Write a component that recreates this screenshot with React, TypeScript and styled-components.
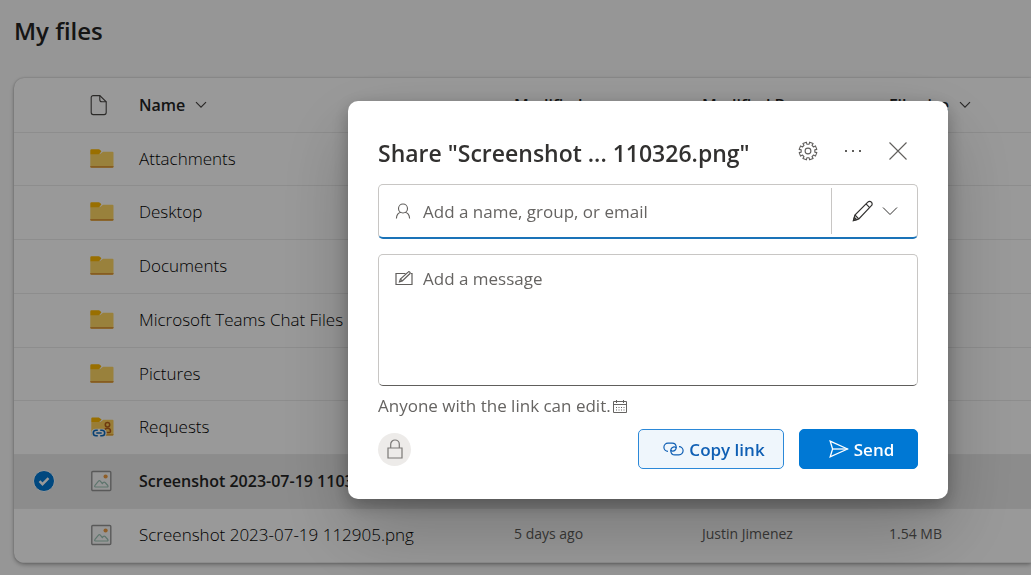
import React from "react";
import styled, { createGlobalStyle } from "styled-components";

const GlobalStyle = createGlobalStyle`
  * { box-sizing: border-box; }
  body {
    margin: 0;
    background: #fafafa;
    color: #242424;
    font-family: "Open Sans", "Noto Sans", sans-serif;
    font-weight: 400;
    overflow: hidden;
  }
  button, input, textarea { font: inherit; color: inherit; }
`;

const Page = styled.main`
  min-height: 100vh;
  padding: 12px 0 12px 14px;
`;

const PageTitle = styled.h1`
  margin: 0 0 28px;
  font-size: 24px;
  line-height: 38px;
  font-weight: 600;
`;

const Card = styled.section`
  background: #fff;
  border-radius: 10px 0 0 10px;
  box-shadow: 0 0 2px rgba(0, 0, 0, 0.24), 0 2px 4px rgba(0, 0, 0, 0.28);
  overflow: hidden;
`;

const FileTable = styled.table`
  width: 100%;
  table-layout: fixed;
  border-collapse: collapse;
  text-align: left;
`;

const Column = styled.col<{ $width?: number }>`
  width: ${(p) => (p.$width ? `${p.$width}px` : "auto")};
`;

const HeaderCell = styled.th`
  height: 54px;
  padding: 0;
  border-bottom: 1px solid #ebebeb;
  font-size: 16px;
  font-weight: 600;
  white-space: nowrap;
  svg { display: block; color: #484644; }
`;

const SortButton = styled.button`
  display: flex;
  align-items: center;
  gap: 10px;
  padding: 0;
  border: 0;
  background: none;
  cursor: pointer;
`;

const Row = styled.tr<{ $selected?: boolean }>`
  height: 54px;
  background: ${(p) => (p.$selected ? "#e9e9e9" : "transparent")};
  color: ${(p) => (p.$selected ? "#242424" : "#000")};
  font-size: ${(p) => (p.$selected ? 16 : 17)}px;
  font-weight: ${(p) => (p.$selected ? 600 : 300)};
  &:nth-child(4n + 1) { height: 53px; }
`;

const Cell = styled.td<{ $muted?: boolean }>`
  padding: ${(p) => (p.$muted ? "0 0 3px" : "0")};
  border-bottom: 1px solid #ebebeb;
  font-size: ${(p) => (p.$muted ? "14px" : "inherit")};
  font-weight: ${(p) => (p.$muted ? 400 : "inherit")};
  line-height: 24px;
  color: ${(p) => (p.$muted ? "#605e5c" : "inherit")};
  white-space: nowrap;
  svg { display: block; }
`;

const RowCheck = styled.input`
  appearance: none;
  display: block;
  width: 22px;
  height: 22px;
  margin: 0 0 0 19px;
  border: 1px solid #fff;
  border-radius: 50%;
  background: #0078d4
    url("data:image/svg+xml,%3Csvg xmlns='http://www.w3.org/2000/svg' viewBox='0 0 20 20'%3E%3Cpath d='M5.5 10.2l3 3 6-6' fill='none' stroke='white' stroke-width='2.4'/%3E%3C/svg%3E")
    center / 20px no-repeat;
`;

const Overlay = styled.div`
  position: fixed;
  inset: 0;
  display: flex;
  align-items: flex-start;
  justify-content: flex-end;
  padding: 101px 83px 0 16px;
  background: rgba(0, 0, 0, 0.4);
`;

const Dialog = styled.section`
  flex: 0 1 600px;
  padding: 30px;
  border-radius: 10px;
  background: #fff;
  box-shadow: 0 32px 72px rgba(0, 0, 0, 0.22), 0 6px 18px rgba(0, 0, 0, 0.28);
`;

const DialogHeader = styled.header`
  display: flex;
  align-items: flex-start;
  height: 44px;
  margin-bottom: 9px;
`;

const DialogTitle = styled.h2`
  flex: 1;
  margin: 0;
  font-size: 23px;
  line-height: 44px;
  font-weight: 600;
  color: #323130;
  white-space: nowrap;
`;

const HeaderActions = styled.div`
  display: flex;
  align-items: center;
  gap: 5px;
  height: 40px;
`;

const IconButton = styled.button`
  display: grid;
  place-items: center;
  width: 40px;
  height: 40px;
  padding: 0;
  border: 0;
  background: none;
  color: #605e5c;
  cursor: pointer;
`;

const RecipientField = styled.div`
  display: flex;
  align-items: center;
  height: 55px;
  border: 1px solid #c8c6c4;
  border-bottom: 2px solid #1a73b8;
  border-radius: 5px;
  color: #605e5c;
`;

const FieldLabel = styled.label`
  flex: none;
  width: 44px;
  padding-left: 16px;
  svg { display: block; }
`;

const TextInput = styled.input`
  flex: 1;
  min-width: 0;
  padding: 0;
  border: 0;
  outline: 0;
  background: none;
  font-size: 17px;
  &::placeholder { color: #666462; opacity: 1; }
`;

const PermissionButton = styled.button`
  display: flex;
  align-items: center;
  justify-content: center;
  gap: 8px;
  width: 86px;
  height: 46px;
  padding: 0;
  border: 0;
  border-left: 1px solid #c8c6c4;
  background: none;
  color: #323130;
  cursor: pointer;
`;

const MessageField = styled.div`
  display: flex;
  height: 132px;
  margin-top: 15px;
  padding-top: 12px;
  border: 1px solid #c8c6c4;
  border-bottom-color: #605e5c;
  border-radius: 5px;
  color: #605e5c;
  label { padding-top: 4px; }
`;

const MessageInput = styled.textarea`
  flex: 1;
  padding: 0;
  border: 0;
  outline: 0;
  resize: none;
  background: none;
  font-size: 17px;
  line-height: 24px;
  &::placeholder { color: #666462; opacity: 1; }
`;

const LinkSummary = styled.p`
  display: flex;
  align-items: center;
  gap: 2px;
  margin: 8px 0 11px;
  font-size: 17px;
  line-height: 24px;
  color: #666462;
`;

const DialogFooter = styled.footer`
  display: flex;
  align-items: center;
  gap: 15px;
`;

const LockBadge = styled.button`
  display: grid;
  place-items: center;
  width: 33px;
  height: 33px;
  margin-right: auto;
  padding: 0;
  border: 0;
  border-radius: 50%;
  background: #edebe9;
  color: #7a7876;
`;

const ActionButton = styled.button<{ $primary?: boolean }>`
  display: flex;
  align-items: center;
  justify-content: center;
  gap: 5px;
  width: ${(p) => (p.$primary ? 119 : 146)}px;
  height: 40px;
  padding: 0 0 0 6px;
  border: 1px solid ${(p) => (p.$primary ? "#0078d4" : "#2b88d8")};
  border-radius: 5px;
  background: ${(p) => (p.$primary ? "#0078d4" : "#eff6fc")};
  color: ${(p) => (p.$primary ? "#fff" : "#0f5fb4")};
  font-size: 17px;
  font-weight: 600;
  cursor: pointer;
`;

type GlyphProps = { w: number; h: number; sw?: number; children: React.ReactNode };

const Glyph = ({ w, h, sw = 1, children }: GlyphProps) => (
  <svg
    width={w}
    height={h}
    viewBox={`0 0 ${w} ${h}`}
    fill="none"
    stroke="currentColor"
    strokeWidth={sw}
    aria-hidden="true"
  >
    {children}
  </svg>
);

const Chevron = () => (
  <Glyph w={12} h={8} sw={1.2}>
    <path d="M1 1.200l5 5 5-5" />
  </Glyph>
);

const FileIcon = () => (
  <Glyph w={18} h={22} sw={1.1}>
    <path d="M3.200 1.600h6.600l6.400 6.200v10.800a2 2 0 0 1-2 2h-11a2 2 0 0 1-2-2v-15a2 2 0 0 1 2-2z" />
    <path d="M9.800 1.600v4.200a2 2 0 0 0 2 2h4.400" />
  </Glyph>
);

const FolderIcon = () => (
  <svg width="24" height="20" viewBox="0 0 24 20" aria-hidden="true">
    <path d="M.3 5h9.700l3-2.200h9.500a1 1 0 0 1 1 1v13.700a1.200 1.200 0 0 1-1.200 1.200H1.500A1.200 1.200 0 0 1 .3 17.500z" fill="#ffd765" />
    <path d="M.3 1.500A1.200 1.200 0 0 1 1.500.3h7.200c.5 0 .9.200 1.200.5l1.500 1.500-1.600 2.200c-.3.500-.8.700-1.300.700H.3z" fill="#ffb900" />
    <path d="M.3 17h23.200v.6a1.200 1.200 0 0 1-1.200 1.200H1.500A1.200 1.200 0 0 1 .3 17.600z" fill="#e0993a" />
  </svg>
);

const SharedFolderIcon = () => (
  <svg width="24" height="21" viewBox="0 0 24 21" aria-hidden="true">
    <path d="M1.300 5h9l3-2.200h9.200a1 1 0 0 1 1 1v13.700a1 1 0 0 1-1 1H2.300a1 1 0 0 1-1-1z" fill="#ffd05a" />
    <path d="M1.300 1.500a1 1 0 0 1 1-1h6.500l2.800 2-1.500 1.800a2 2 0 0 1-1.400.7H1.300z" fill="#ffb900" />
    <path d="M14 17.200h9.500v.3a1 1 0 0 1-1 1H14z" fill="#e09a2c" />
    <g fill="none" stroke="#b8601a" strokeWidth="1.500">
      <circle cx="17.500" cy="7.700" r="2.200" />
      <path d="M14.500 15.600v-1.300c0-2 1-3 3-3s3 1 3 3c0 .9-.5 1.300-1.300 1.300z" />
    </g>
    <rect x="1.300" y="11.800" width="15.400" height="8.400" rx="4.200" fill="#fff" />
    <path d="M7.800 13.300H6a2.700 2.700 0 0 0 0 5.400h1.800M10.200 13.300H12a2.700 2.700 0 0 1 0 5.400h-1.800M6.300 16h5.400" fill="none" stroke="#0f6cbd" strokeWidth="1.600" />
  </svg>
);

const ImageIcon = () => (
  <svg width="22" height="22" viewBox="0 0 22 22" aria-hidden="true">
    <rect x="1.800" y="1.500" width="19" height="19" rx="1" fill="#fbfbfb" stroke="#959595" strokeWidth="1.400" />
    <circle cx="15.600" cy="6.500" r="2.100" fill="#ef9d43" />
    <path d="M4.600 16.300c0-.4.100-.7.400-1l3.500-4.200c.5-.6 1.300-.6 1.800 0l2 2.400 1-1c.5-.5 1.300-.5 1.800 0l2.700 3c.5.700.2 1.500-.6 1.500H5.500c-.5 0-.9-.3-.9-.7z" fill="none" stroke="#9dc3b6" strokeWidth="1.200" />
  </svg>
);

const toothAngles = [0, 45, 90, 135, 180, 225, 270, 315];

const gearPath = (() => {
  const polar = (radius: number, degrees: number) => {
    const a = ((degrees + 22.5) * Math.PI) / 180;
    return `${(10 + radius * Math.cos(a)).toFixed(2)} ${(10 + radius * Math.sin(a)).toFixed(2)}`;
  };
  const points = toothAngles.flatMap((t) => [
    polar(6.9, t - 13),
    polar(9, t - 12),
    polar(9, t + 12),
    polar(6.9, t + 13),
  ]);
  return `M${points.join("L")}Z`;
})();

const GearIcon = () => (
  <Glyph w={20} h={20} sw={1.1}>
    <path d={gearPath} strokeLinejoin="round" />
    <circle cx="10" cy="10" r="2.900" />
  </Glyph>
);

const MoreIcon = () => (
  <svg width="18" height="4" viewBox="0 0 18 4" fill="currentColor" aria-hidden="true">
    <rect x="1" y="1" width="2" height="2" />
    <rect x="8" y="1" width="2" height="2" />
    <rect x="15" y="1" width="2" height="2" />
  </svg>
);

const CloseIcon = () => (
  <Glyph w={18} h={18} sw={1.1}>
    <path d="M.5.5l17 17M17.500.5l-17 17" />
  </Glyph>
);

const PersonIcon = () => (
  <Glyph w={16} h={16} sw={1.1}>
    <circle cx="8" cy="5.500" r="4.500" />
    <path d="M1.400 15.500c.2-3.600 2.300-5.800 4.800-6.200M14.600 15.500c-.2-3.600-2.300-5.800-4.800-6.200" />
  </Glyph>
);

const PencilIcon = () => (
  <Glyph w={22} h={22} sw={1.2}>
    <path d="M1.500 20.500l1.400-5.500L15.800 2.100c1-1 2.600-1 3.600 0s1 2.600 0 3.600L6.800 18.900z" />
    <path d="M2.900 15l3.900 3.900M14 3.900l3.700 3.700M1.500 20.500l3.200-.8-2.300-2.300z" />
  </Glyph>
);

const WideChevron = () => (
  <Glyph w={16} h={10}>
    <path d="M1 1.500l7 7 7-7" />
  </Glyph>
);

const ComposeIcon = () => (
  <Glyph w={18} h={15} sw={1.2}>
    <path d="M10.500 2.500H1v11h16v-11h-1" />
    <path d="M4.500 10.800l.9-2.700 7.700-7c.5-.5 1.200-.4 1.700 0 .5.500.5 1.200 0 1.700l-7.500 7.100z" />
    <path d="M5.400 8.100l1.900 1.800" />
  </Glyph>
);

const CalendarIcon = () => (
  <Glyph w={14} h={13} sw={1}>
    <path d="M.5 1.500h13v11H.5zM.5 4.500h13M3.500 0v3M10.500 0v3" />
    <path d="M3 7.500h8.500M3 10h8.500" strokeDasharray="1 1.500" />
  </Glyph>
);

const LockIcon = () => (
  <Glyph w={16} h={20} sw={1.2}>
    <path d="M1 9h14v10H1z" />
    <path d="M3.700 9V5.300a4.300 4.300 0 0 1 8.600 0V9" />
  </Glyph>
);

const LinkIcon = () => (
  <Glyph w={21} h={14} sw={1.2}>
    <path d="M5 9.300a4.100 4.100 0 0 1 0-8.200h4.200a4.100 4.100 0 0 1 .8 8.100c-1.300.1-2-.4-2.300-1.200" />
    <path d="M16 4.700a4.100 4.100 0 0 1 0 8.200h-4.200A4.100 4.100 0 0 1 11 4.800c1.300-.1 2 .4 2.300 1.200" />
  </Glyph>
);

const SendIcon = () => (
  <Glyph w={20} h={18} sw={1.3}>
    <path d="M1.200 1.200L18.600 9 1.200 16.800 3.600 9z" />
    <path d="M3.600 9h15" />
  </Glyph>
);

type FileKind = "folder" | "shared" | "image";

type FileEntry = {
  name: string;
  kind: FileKind;
  selected?: boolean;
  modified?: string;
  modifiedBy?: string;
  size?: string;
};

const files: FileEntry[] = [
  { name: "Attachments", kind: "folder" },
  { name: "Desktop", kind: "folder" },
  { name: "Documents", kind: "folder" },
  { name: "Microsoft Teams Chat Files", kind: "folder" },
  { name: "Pictures", kind: "folder" },
  { name: "Requests", kind: "shared" },
  { name: "Screenshot 2023-07-19 110326.png", kind: "image", selected: true },
  {
    name: "Screenshot 2023-07-19 112905.png",
    kind: "image",
    modified: "5 days ago",
    modifiedBy: "Justin Jimenez",
    size: "1.54 MB",
  },
];

const icons: Record<FileKind, React.ReactNode> = {
  folder: <FolderIcon />,
  shared: <SharedFolderIcon />,
  image: <ImageIcon />,
};

export default function App() {
  return (
    <>
      <GlobalStyle />
      <Page>
        <PageTitle>My files</PageTitle>
        <Card>
          <FileTable>
            <colgroup>
              <Column $width={76} />
              <Column $width={49} />
              <Column $width={375} />
              <Column $width={188} />
              <Column $width={187} />
              <Column />
            </colgroup>
            <thead>
              <tr>
                <HeaderCell />
                <HeaderCell aria-label="File type"><FileIcon /></HeaderCell>
                <HeaderCell><SortButton>Name <Chevron /></SortButton></HeaderCell>
                <HeaderCell><SortButton>Modified <Chevron /></SortButton></HeaderCell>
                <HeaderCell><SortButton>Modified By <Chevron /></SortButton></HeaderCell>
                <HeaderCell><SortButton>File size <Chevron /></SortButton></HeaderCell>
              </tr>
            </thead>
            <tbody>
              {files.map((file) => (
                <Row key={file.name} $selected={file.selected}>
                  <Cell>
                    {file.selected && (
                      <RowCheck type="checkbox" defaultChecked aria-label={`Select ${file.name}`} />
                    )}
                  </Cell>
                  <Cell>{icons[file.kind]}</Cell>
                  <Cell>{file.name}</Cell>
                  <Cell $muted>{file.modified}</Cell>
                  <Cell $muted>{file.modifiedBy}</Cell>
                  <Cell $muted>{file.size}</Cell>
                </Row>
              ))}
            </tbody>
          </FileTable>
        </Card>
      </Page>
      <Overlay>
        <Dialog role="dialog" aria-modal="true" aria-labelledby="share-title">
          <DialogHeader>
            <DialogTitle id="share-title">Share "Screenshot ... 110326.png"</DialogTitle>
            <HeaderActions>
              <IconButton aria-label="Link settings"><GearIcon /></IconButton>
              <IconButton aria-label="More options"><MoreIcon /></IconButton>
              <IconButton aria-label="Close"><CloseIcon /></IconButton>
            </HeaderActions>
          </DialogHeader>
          <RecipientField>
            <FieldLabel htmlFor="recipient" aria-label="Recipient"><PersonIcon /></FieldLabel>
            <TextInput id="recipient" placeholder="Add a name, group, or email" />
            <PermissionButton aria-label="Can edit" aria-haspopup="menu">
              <PencilIcon />
              <WideChevron />
            </PermissionButton>
          </RecipientField>
          <MessageField>
            <FieldLabel htmlFor="message" aria-label="Message"><ComposeIcon /></FieldLabel>
            <MessageInput id="message" placeholder="Add a message" />
          </MessageField>
          <LinkSummary>Anyone with the link can edit. <CalendarIcon /></LinkSummary>
          <DialogFooter>
            <LockBadge aria-label="Manage access"><LockIcon /></LockBadge>
            <ActionButton><LinkIcon />Copy link</ActionButton>
            <ActionButton $primary><SendIcon />Send</ActionButton>
          </DialogFooter>
        </Dialog>
      </Overlay>
    </>
  );
}
